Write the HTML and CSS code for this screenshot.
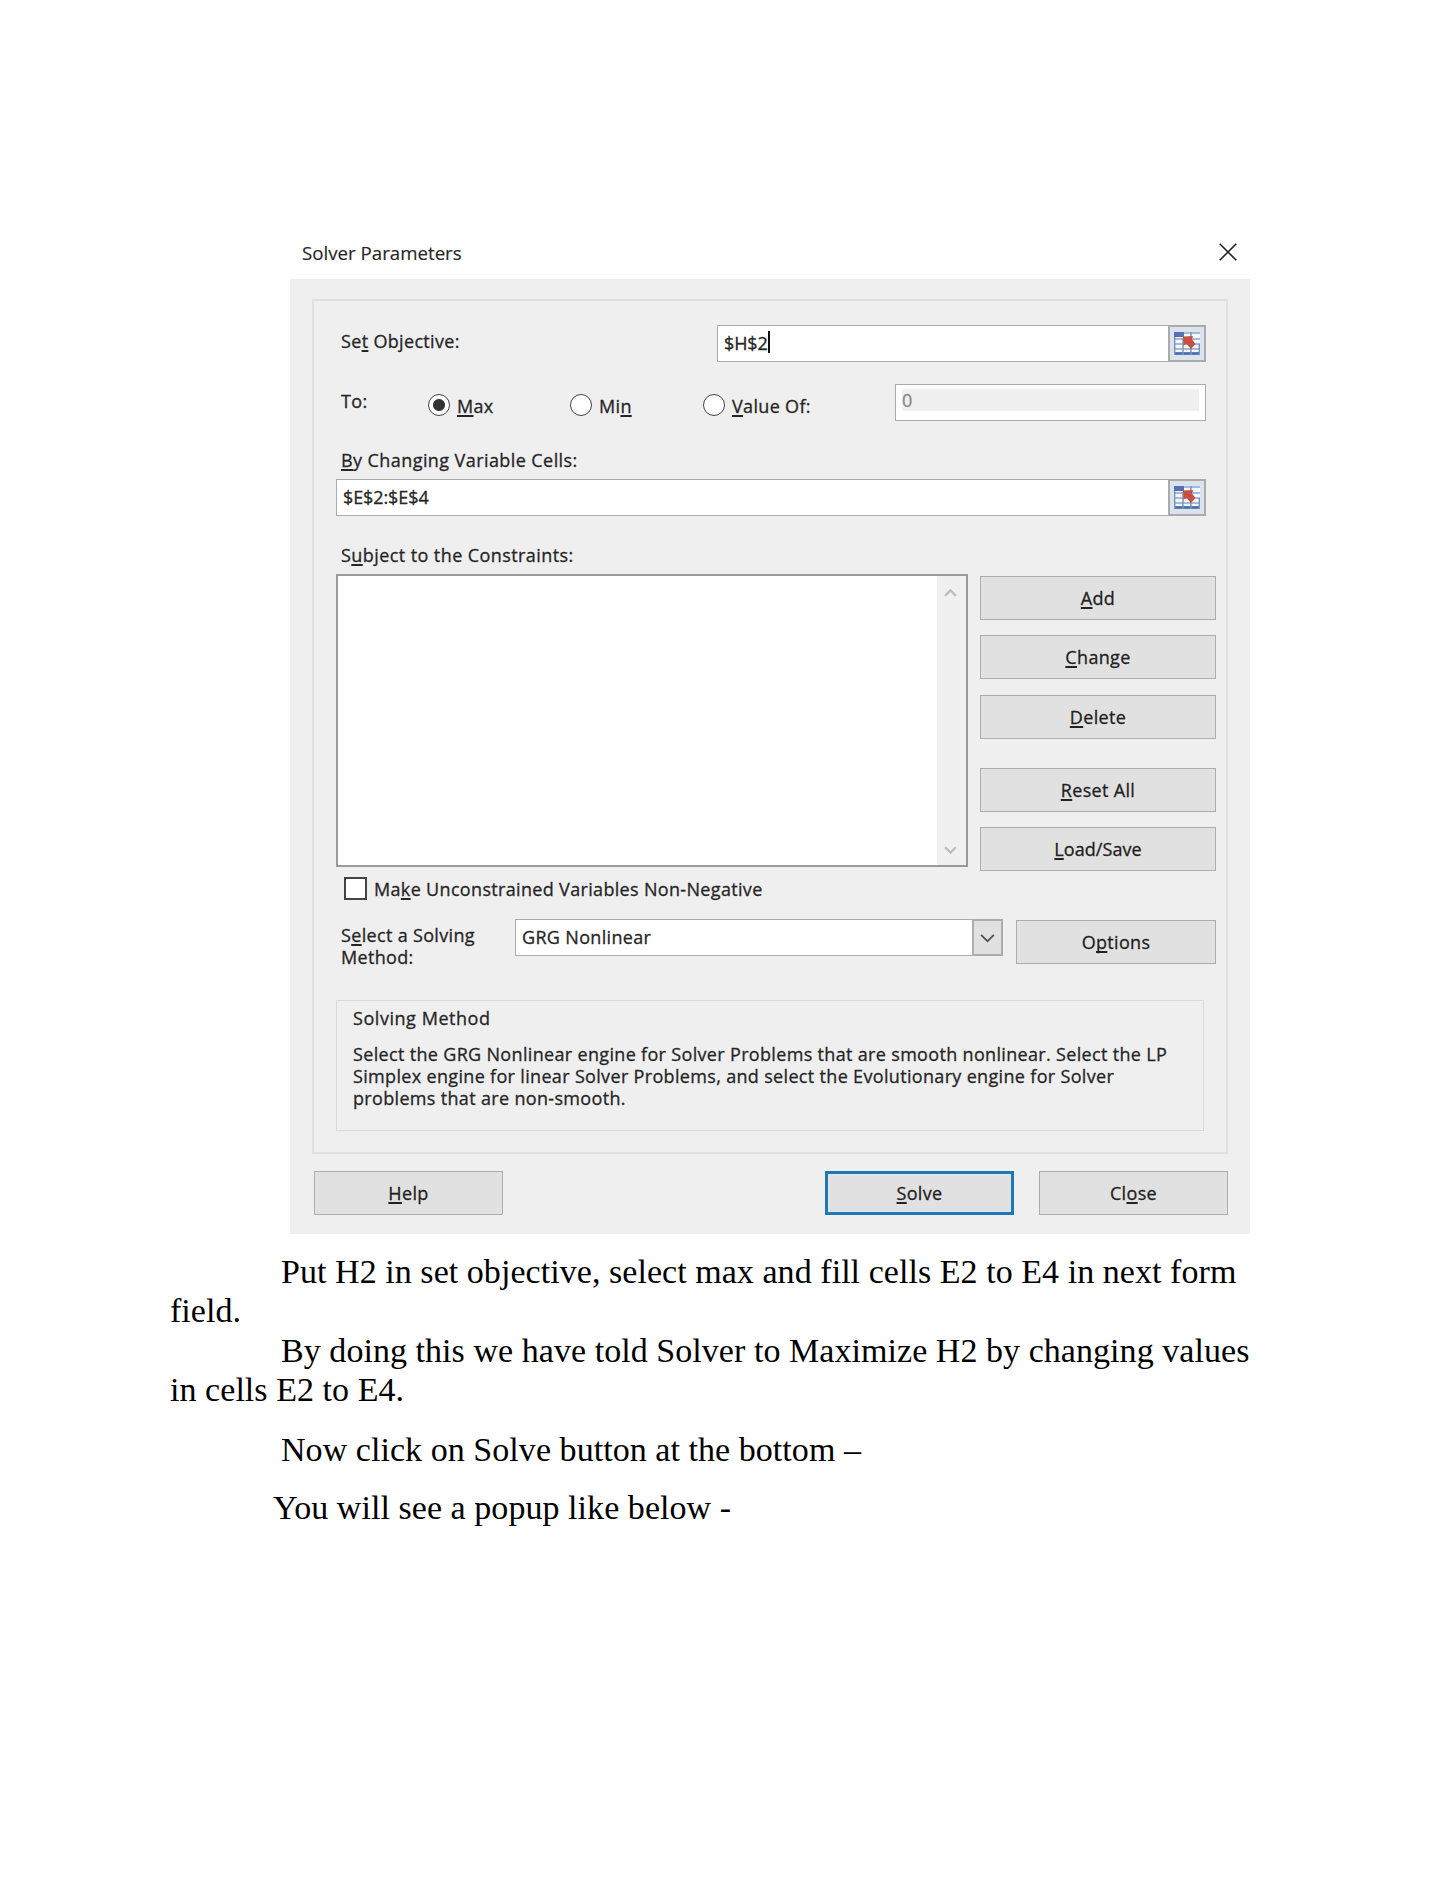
FILE: index.html
```html
<!DOCTYPE html>
<html lang="en">
<head>
<meta charset="utf-8">
<title>Solver Parameters</title>
<link rel="stylesheet" href="styles.css">
</head>
<body>
<svg class="defs" width="0" height="0" aria-hidden="true">
  <symbol id="range-icon" viewBox="0 0 26 23">
    <rect x="0" y="0" width="26" height="23" fill="#f4f8fd"/>
    <rect x="0" y="0" width="10" height="5" fill="#5570b4"/>
    <path d="M10 1H26M0 7H26M0 12H26M0 17H26" stroke="#8ba6d2" stroke-width="1.600"/>
    <path d="M0 21.500H26" stroke="#4a70b4" stroke-width="2.800"/>
    <path d="M.7 5V23M9 6V23M17 0V23M25.300 12V23" stroke="#7c90ba" stroke-width="1.400"/>
    <path d="M9 4.500L19 4l-1 3.500 3.500 4.500-4.500 5-4.500-5-3 1.500z" fill="#c9503f"/>
  </symbol>
</svg>
<main class="page">
  <section class="dialog">
    <header class="titlebar">
      <span class="t title">Solver Parameters</span>
      <svg class="close-icon" viewBox="0 0 18 18"><path d="M.7.7L17.300 17.300M17.300.7L.7 17.300"/></svg>
    </header>
    <div class="content">
      <div class="panel">
        <div class="row objective">
          <span class="t">Se<u>t</u> Objective:</span>
          <div class="field ref-field"><span class="t value cells">$H$2</span><i class="caret"></i><span class="picker"><svg><use href="#range-icon"/></svg></span></div>
        </div>
        <div class="row target">
          <span class="t to">To:</span>
          <span class="option"><i class="radio on"></i><span class="t"><u>M</u>ax</span></span>
          <span class="option"><i class="radio"></i><span class="t">Mi<u>n</u></span></span>
          <span class="option"><i class="radio"></i><span class="t"><u>V</u>alue Of:</span></span>
          <div class="field number"><span class="disabled">0</span></div>
        </div>
        <div class="label"><span class="t"><u>B</u>y Changing Variable Cells:</span></div>
        <div class="field ref-field wide"><span class="t value cells">$E$2:$E$4</span><span class="picker"><svg><use href="#range-icon"/></svg></span></div>
        <div class="label"><span class="t">S<u>u</u>bject to the Constraints:</span></div>
        <div class="row constraints">
          <div class="list">
            <div class="scrollbar">
              <svg viewBox="0 0 12 8"><path d="M1 7L6 2l5 5"/></svg>
              <svg viewBox="0 0 12 8"><path d="M1 1l5 5 5-5"/></svg>
            </div>
          </div>
          <div class="actions">
            <button class="btn"><span class="t"><u>A</u>dd</span></button>
            <button class="btn"><span class="t"><u>C</u>hange</span></button>
            <button class="btn"><span class="t"><u>D</u>elete</span></button>
            <button class="btn apart"><span class="t"><u>R</u>eset All</span></button>
            <button class="btn"><span class="t tight"><u>L</u>oad/Save</span></button>
          </div>
        </div>
        <div class="row check"><i class="box"></i><span class="t">Ma<u>k</u>e Unconstrained Variables Non-Negative</span></div>
        <div class="row solver">
          <div class="solver-label"><span class="t">S<u>e</u>lect a Solving</span><br><span class="t">Method:</span></div>
          <div class="field combo"><span class="t value">GRG Nonlinear</span><span class="drop"><svg viewBox="0 0 14 9"><path d="M1 1.500l6 6 6-6"/></svg></span></div>
          <button class="btn options"><span class="t">O<u>p</u>tions</span></button>
        </div>
        <div class="method">
          <div><span class="t heading">Solving Method</span></div>
          <p><span class="t">Select the GRG Nonlinear engine for Solver Problems that are smooth nonlinear. Select the LP</span><br><span class="t">Simplex engine for linear Solver Problems, and select the Evolutionary engine for Solver</span><br><span class="t">problems that are non-smooth.</span></p>
        </div>
      </div>
      <footer class="footer">
        <button class="btn"><span class="t"><u>H</u>elp</span></button>
        <button class="btn primary"><span class="t"><u>S</u>olve</span></button>
        <button class="btn"><span class="t">Cl<u>o</u>se</span></button>
      </footer>
    </div>
  </section>
  <article class="prose">
    <p>Put H2 in set objective, select max and fill cells E2 to E4 in next form<br>field.</p>
    <p class="next">By doing this we have told Solver to Maximize H2 by changing values<br>in cells E2 to E4.</p>
    <p class="spaced">Now click on Solve button at the bottom –</p>
    <p class="last">You will see a popup like below -</p>
  </article>
</main>
</body>
</html>
```
FILE: styles.css
```css
* { box-sizing: border-box; }
body { margin: 0; background: #fff; }
.defs { position: absolute; }
.page { width: 1450px; height: 1877px; overflow: hidden; padding-top: 228px; }

.dialog {
  width: 960px;
  margin-left: 290px;
  font: 18px/22px "Open Sans", "Noto Sans", sans-serif;
  letter-spacing: 0.33px;
  color: #262626;
  -webkit-text-stroke: 0.3px currentColor;
}
.dialog .t { white-space: nowrap; }
u { text-decoration-thickness: 1.5px; text-underline-offset: 2px; text-decoration-skip-ink: none; }

.titlebar { display: flex; justify-content: space-between; height: 51px; padding: 14px 13px 0 12px; }
.title { font-size: 18.7px; letter-spacing: 0; -webkit-text-stroke-width: 0.15px; }
.close-icon { width: 18px; height: 18px; margin-top: 1px; fill: none; stroke: #222; stroke-width: 1.6; }

.content { height: 955px; padding: 20px 22px 0 22px; background: #efefef; }
.panel { height: 855px; border: 2px solid #e0e0e0; }
.row { display: flex; align-items: flex-start; }

.field { display: flex; height: 37px; border: 1.5px solid #ababab; background: #fff; }
.value { padding: 6px 0 0 6px; }
.cells { letter-spacing: -0.1px; }
.objective { justify-content: space-between; margin: 24px 20px 0 27px; }
.objective > .t { margin-top: 5px; }
.ref-field { width: 489px; }
.wide { width: 870px; margin: 8px 0 0 22px; }
.caret { width: 2px; height: 22px; margin-top: 5px; background: #111; }
.picker {
  display: flex; align-items: center; justify-content: center;
  width: 38px; height: 37px; margin: -1px -1px 0 auto;
  border: 2px solid #a9abae; background: #dde3ea;
}
.picker svg { width: 26px; height: 23px; }

.target { display: grid; grid-template-columns: 87px 142px 133px 192px 311px; margin: 22px 0 0 27px; }
.to { margin-top: 6px; }
.option { display: flex; gap: 7px; padding-top: 10px; }
.option .t { margin-top: 1px; }
.radio { width: 22px; height: 22px; border: 1.8px solid #444; border-radius: 50%; background: #fff; }
.radio.on { background: radial-gradient(circle, #333 5.5px, #fff 6.5px); }
.number { padding: 4px 6px; }
.disabled { flex: 1; height: 22px; background: #f0f0f0; color: #888; line-height: 23px; }

.label { height: 22px; margin: 28px 0 0 27px; letter-spacing: 0.42px; }

.constraints { gap: 12px; margin: 8px 0 0 22px; }
.list { display: flex; justify-content: flex-end; width: 632px; height: 293px; border: 2px solid #9a9a9c; background: #fff; }
.scrollbar { display: flex; flex-direction: column; justify-content: space-between; align-items: center; width: 29px; padding: 12px 3px 10px 0; background: #f0f0f0; }
.scrollbar svg { width: 13px; height: 9px; fill: none; stroke: #bdbdbd; stroke-width: 2.2; }
.actions { display: flex; flex-direction: column; gap: 15.3px; padding-top: 2px; height: 298px; }
.btn {
  flex: none; width: 236px; height: 44px; padding: 0;
  border: 1.5px solid #adadad; border-radius: 0; background: #e1e1e1;
  color: #222; font: inherit; letter-spacing: inherit; text-align: center;
}
.apart { margin-top: 13.7px; }
.tight { letter-spacing: 0.05px; }

.check { gap: 7px; height: 23px; margin: 5px 0 0 30px; }
.check .t { margin-top: 1px; }
.box { width: 23px; height: 23px; border: 2px solid #444; background: #fff; }

.solver { height: 49px; margin: 19px 0 0 27px; }
.solver-label { width: 174px; padding-top: 5px; }
.combo { width: 488px; }
.drop { display: flex; align-items: center; justify-content: center; width: 31px; height: 37px; margin: -1px -1px 0 auto; border: 2px solid #adadad; background: #e1e1e1; }
.drop svg { width: 15px; height: 10px; fill: none; stroke: #555; stroke-width: 1.7; }
.options { width: 200px; margin: 1px 0 0 13px; }

.method { width: 868px; height: 131px; margin: 32px 0 0 22px; padding: 6px 0 0 16px; border: 1.5px solid #dadada; }
.heading { letter-spacing: 0.55px; }
.method p { margin: 14px 0 0; }

.footer { display: flex; margin-top: 17px; padding-left: 2px; }
.footer .btn { width: 189px; }
.footer .primary { margin: 0 25px 0 auto; border: 3px solid #2077b4; box-shadow: inset 0 0 0 1px #d3e9f6; }

.prose { width: 1090px; margin-left: 170px; padding-top: 18px; font: 34px/39px "Liberation Serif", serif; letter-spacing: 0.05px; color: #000; white-space: nowrap; }
.prose p { margin: 0; text-indent: 111px; }
.prose .next { margin-top: 1px; }
.prose .spaced { margin-top: 21px; }
.prose .last { margin-top: 19px; text-indent: 103px; }
```
